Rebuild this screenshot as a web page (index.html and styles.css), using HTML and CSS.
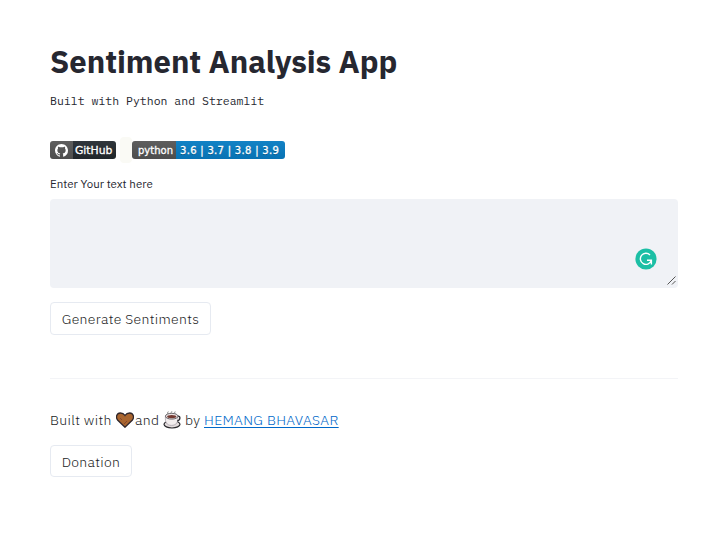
FILE: index.html
```html
<!DOCTYPE html>
<html lang="en">
<head>
<meta charset="utf-8">
<title>Sentiment Analysis App</title>
<link rel="stylesheet" href="styles.css">
</head>
<body>
<main class="app">
  <h1 class="title"><span>Sentiment Analysis App</span></h1>
  <p class="subtitle"><span>Built with Python and Streamlit</span></p>
  <div class="badges">
    <a class="badge github"><span class="badge-icon"><svg width="13" height="13" viewBox="0 0 16 16"><path fill="#fff" d="M8 0C3.58 0 0 3.58 0 8c0 3.54 2.29 6.53 5.47 7.59.4.07.55-.17.55-.38 0-.19-.01-.82-.01-1.49-2.01.37-2.53-.49-2.69-.94-.09-.23-.48-.94-.82-1.13-.28-.15-.68-.52-.01-.53.63-.01 1.08.58 1.23.82.72 1.21 1.87.87 2.33.66.07-.52.28-.87.51-1.07-1.78-.2-3.64-.89-3.64-3.95 0-.87.31-1.59.82-2.15-.08-.2-.36-1.02.08-2.12 0 0 .67-.21 2.2.82a7.6 7.6 0 0 1 4 0c1.53-1.04 2.2-.82 2.2-.82.44 1.1.16 1.92.08 2.12.51.56.82 1.27.82 2.15 0 3.07-1.87 3.75-3.65 3.95.29.25.54.73.54 1.48 0 1.07-.01 1.93-.01 2.2 0 .21.15.46.55.38A8 8 0 0 0 16 8c0-4.42-3.58-8-8-8z"/></svg></span><span class="badge-name"><span>GitHub</span></span></a>
    <span class="spacer"></span>
    <a class="badge python"><span class="badge-key"><span>python</span></span><span class="badge-value"><span>3.6 | 3.7 | 3.8 | 3.9</span></span></a>
  </div>
  <label class="label"><span>Enter Your text here</span></label>
  <div class="textbox">
    <svg class="checker" width="22" height="22" viewBox="0 0 22 22"><circle cx="11" cy="11" r="10.6" fill="#1cbfa5"/><path d="M15 6.9A5.6 5.6 0 1 0 16.2 12.8M12 12.2H16.4V16.4" fill="none" stroke="#fff" stroke-width="1.4"/></svg>
    <svg class="grip" width="9" height="9" viewBox="0 0 9 9"><path d="M.5 8.5 8.5.5M5 8.5 8.5 5" stroke="#555" stroke-width="1"/></svg>
  </div>
  <button class="button generate"><span>Generate Sentiments</span></button>
  <hr class="rule">
  <p class="credit"><span class="built">Built with</span>
    <svg class="heart" width="18" height="16" viewBox="0 0 18 16"><path d="M9 15.2 1.8 8.2C-.8 5.2.8 1 4.3 1 6.4 1 8 2 9 3.5 10 2 11.6 1 13.7 1c3.5 0 5.1 4.2 2.5 7.2z" fill="#a9652f" stroke="#30262a" stroke-width="1.3"/><path d="M4 6l2 2M11 9l-3 3" stroke="#84462c" stroke-width="1"/></svg>
    <span class="and">and</span>
    <svg class="cup" width="18" height="18" viewBox="0 0 18 18"><ellipse cx="9" cy="13.3" rx="8" ry="3.7" fill="#e4dddd" stroke="#29282c" stroke-width="1.2"/><path d="M2.4 5.8C2 11 3.6 14.4 8.5 14.4s6.8-3.2 6.3-8.6z" fill="#f3eeee" stroke="#a7a1aa" stroke-width=".8"/><path d="M14.5 5.3c3.2-.8 3.3 4-.2 4.7" fill="none" stroke="#29282c" stroke-width="1.3"/><ellipse cx="8.7" cy="5.2" rx="6.3" ry="2.9" fill="#e8e2e2" stroke="#59555a" stroke-width=".9"/><ellipse cx="8.7" cy="5.6" rx="4.6" ry="1.6" fill="#733a32"/><path d="M5 3q-1-1 .3-2.5M8.7 2.6q-1-1 .2-2.3M12 3q-1-1 .2-2.5" fill="none" stroke="#888" stroke-width="1"/></svg>
    <span class="by">by</span>
    <a class="author" href="#">HEMANG BHAVASAR</a>
  </p>
  <button class="button donation"><span>Donation</span></button>
</main>
</body>
</html>
```
FILE: styles.css
```css
* { box-sizing: border-box; }
body {
  margin: 0;
  background: #fff;
  color: #262730;
  font-family: "IBM Plex Sans", Roboto, sans-serif;
}
.app {
  display: flex;
  flex-direction: column;
  align-items: flex-start;
  width: 678px;
  padding: 42px 0 0 50px;
}
.title {
  margin: 0;
  font-size: 31px;
  line-height: 40px;
  font-weight: 700;
  letter-spacing: -0.03px;
  white-space: nowrap;
}
.subtitle {
  margin: 9px 0 0;
  font: 11.53px/20px "IBM Plex Mono", "Liberation Mono", monospace;
}
.badges {
  display: flex;
  align-items: center;
  height: 26px;
  margin-top: 26px;
}
.badge {
  display: flex;
  height: 18px;
  overflow: hidden;
  border-radius: 3px;
  color: #fff;
  font: 10px/18px "DejaVu Sans", sans-serif;
  text-shadow: 0 1px 0 rgba(0, 0, 0, 0.3);
  -webkit-text-stroke: 0.3px #fff;
  white-space: nowrap;
}
.badge-icon {
  display: flex;
  align-items: center;
  justify-content: center;
  width: 23px;
  padding-right: 1px;
  background: linear-gradient(#5e5e5e, #4d4d4d);
}
.badge-name {
  width: 43px;
  padding-left: 2px;
  font-size: 10.8px;
  line-height: 19px;
  background: linear-gradient(#30363c, #20262b);
}
.spacer {
  width: 12px;
  height: 26px;
  margin: 0 4px;
  border-radius: 4px;
  background: #fafaf5;
}
.python { margin-left: -4px; }
.badge-key, .badge-value { line-height: 19px; }
.badge-key {
  width: 44px;
  padding-left: 6px;
  background: linear-gradient(#5e5e5e, #4d4d4d);
}
.badge-value {
  width: 109px;
  padding-left: 4px;
  letter-spacing: 0.3px;
  background: linear-gradient(#1282c5, #0872b3);
}
.label {
  margin-top: 13px;
  font-size: 11.5px;
  line-height: 16px;
}
.textbox {
  position: relative;
  width: 628px;
  height: 89px;
  margin-top: 7px;
  border-radius: 4px;
  background: #f0f2f6;
}
.checker { position: absolute; left: 585px; top: 49px; }
.grip { position: absolute; right: 2px; bottom: 3px; }
.button {
  height: 33px;
  margin: 14px 0 0;
  padding: 1px 0 0;
  border: 1px solid #e6eaf1;
  border-radius: 4px;
  background: #fff;
  color: #1b1c24;
  font: 300 14px/20px "IBM Plex Sans", Roboto, sans-serif;
}
.generate { width: 161px; letter-spacing: 0.33px; }
.rule {
  width: 628px;
  height: 1px;
  margin: 43px 0 0;
  border: 0;
  background: #f3f4f7;
}
.credit {
  display: flex;
  align-items: center;
  height: 24px;
  margin: 29px 0 0;
  color: #1b1c24;
  font-size: 14px;
  font-weight: 300;
  letter-spacing: 0.33px;
}
.built { width: 66px; }
.and { width: 28px; }
.by { width: 18px; margin-left: 4px; }
.heart { margin-right: 1px; }
.author { margin-left: 1px; color: #0068c9; text-underline-offset: 2px; }
.donation { width: 82px; height: 32px; margin-top: 13px; letter-spacing: 0.33px; }
```
